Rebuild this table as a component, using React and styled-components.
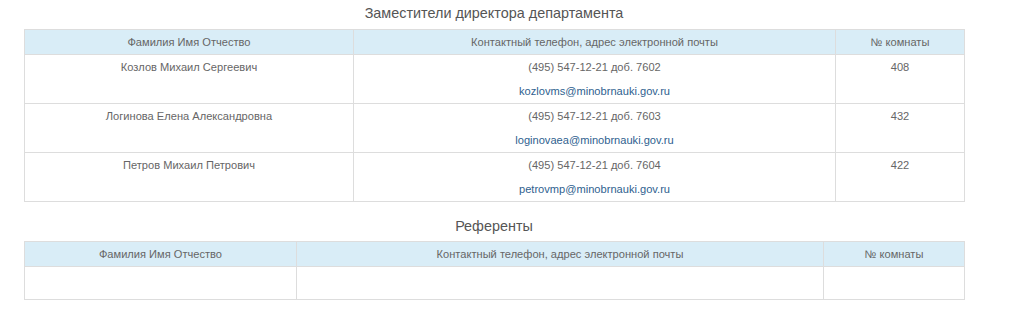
import React from 'react';
import styled, { createGlobalStyle } from 'styled-components';

const GlobalStyle = createGlobalStyle`
  body {
    margin: 0;
    background: #fff;
    font-family: "Liberation Sans", Arial, sans-serif;
    color: #666;
  }
`;

const Page = styled.div`
  width: 940px;
  padding: 0 24px;
`;

const Title = styled.h3`
  margin: 0;
  height: ${(p) => p.$height}px;
  padding-top: ${(p) => p.$top}px;
  box-sizing: border-box;
  font-size: 14.4px;
  font-weight: normal;
  line-height: 18px;
  color: #555;
  text-align: center;
`;

const Table = styled.table`
  width: 100%;
  border-collapse: collapse;
  table-layout: fixed;
  font-size: 11.1px;
  line-height: 14px;
`;

const Th = styled.th`
  width: ${(p) => p.$w}px;
  background: #d9edf7;
  border: 1px solid #dddddd;
  font-weight: normal;
  color: #666;
  height: 25px;
  padding: 0 5px;
  box-sizing: border-box;
  text-align: center;
`;

const Td = styled.td`
  border: 1px solid #dddddd;
  padding: 5px;
  text-align: center;
  vertical-align: top;
  height: ${(p) => p.$h || 'auto'};
  box-sizing: border-box;
`;

const Line = styled.p`
  margin: 0 0 10px;
  &:last-child {
    margin-bottom: 0;
  }
`;

const Mail = styled.a`
  color: #2f5f8f;
  text-decoration: none;
`;

const deputies = [
  { name: 'Козлов Михаил Сергеевич', phone: '(495) 547-12-21 доб. 7602', mail: 'kozlovms@minobrnauki.gov.ru', room: '408' },
  { name: 'Логинова Елена Александровна', phone: '(495) 547-12-21 доб. 7603', mail: 'loginovaea@minobrnauki.gov.ru', room: '432' },
  { name: 'Петров Михаил Петрович', phone: '(495) 547-12-21 доб. 7604', mail: 'petrovmp@minobrnauki.gov.ru', room: '422' },
];

const Head = ({ widths }) => (
  <thead>
    <tr>
      <Th $w={widths[0]}>Фамилия Имя Отчество</Th>
      <Th $w={widths[1]}>Контактный телефон, адрес электронной почты</Th>
      <Th $w={widths[2]}>№ комнаты</Th>
    </tr>
  </thead>
);

export default function App() {
  return (
    <Page>
      <GlobalStyle />
      <Title $height={29} $top={4}>Заместители директора департамента</Title>
      <Table>
        <Head widths={[329, 482, 129]} />
        <tbody>
          {deputies.map((d) => (
            <tr key={d.mail}>
              <Td>{d.name}</Td>
              <Td>
                <Line>{d.phone}</Line>
                <Line><Mail href={`mailto:${d.mail}`}>{d.mail}</Mail></Line>
              </Td>
              <Td>{d.room}</Td>
            </tr>
          ))}
        </tbody>
      </Table>
      <Title $height={39} $top={15}>Референты</Title>
      <Table>
        <Head widths={[272, 527, 141]} />
        <tbody>
          <tr>
            <Td $h="33px" />
            <Td $h="33px" />
            <Td $h="33px" />
          </tr>
        </tbody>
      </Table>
    </Page>
  );
}
